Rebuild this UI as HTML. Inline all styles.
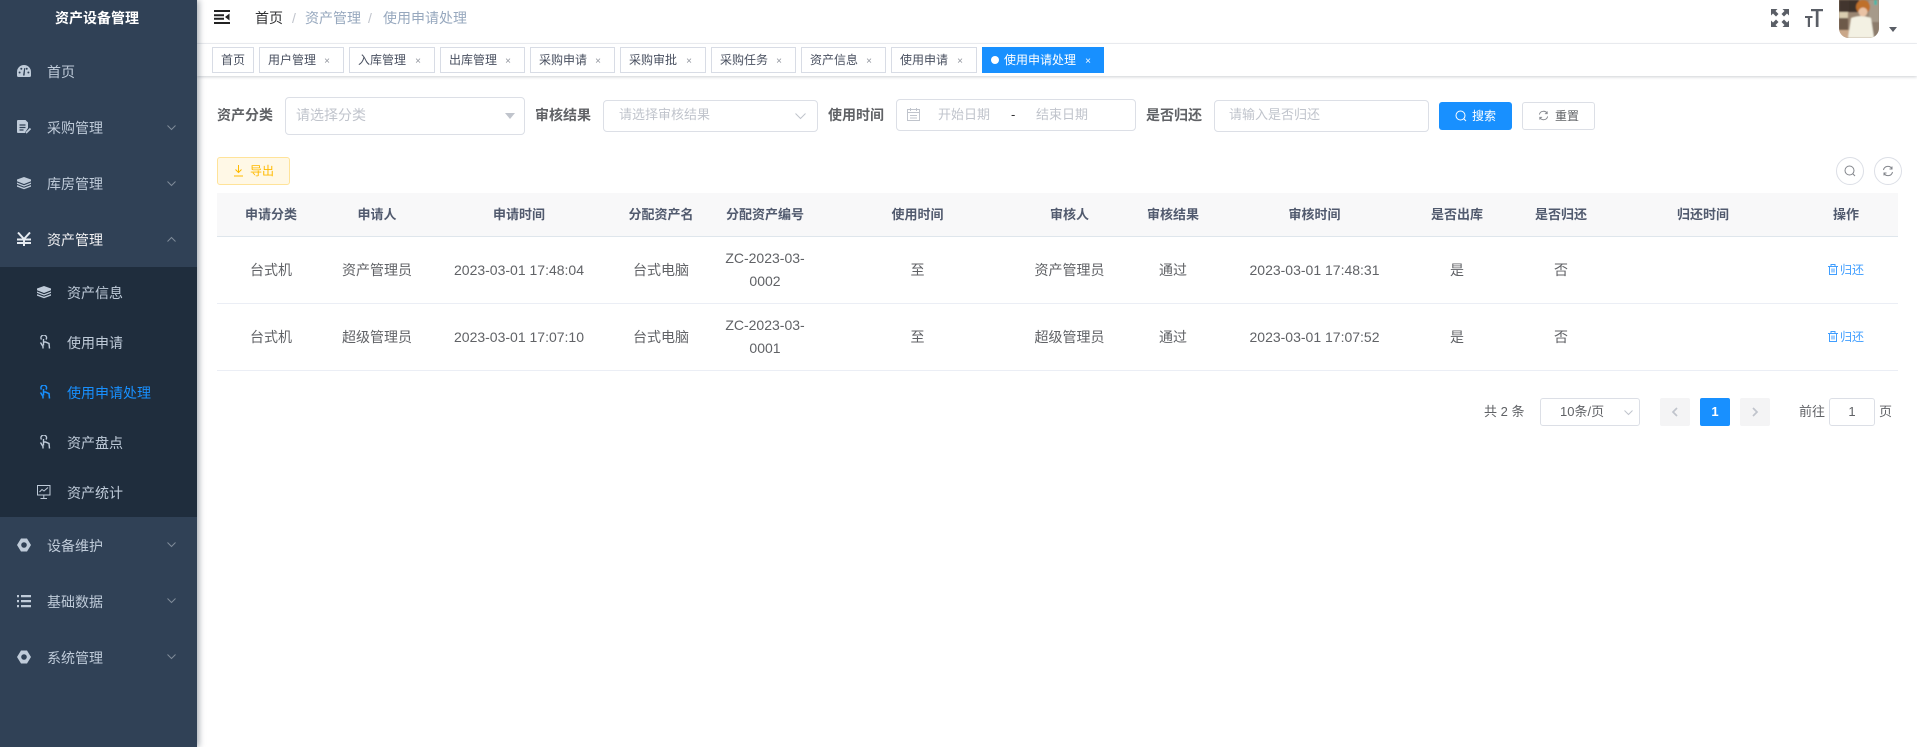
<!DOCTYPE html>
<html lang="zh-CN"><head><meta charset="utf-8"><title>使用申请处理</title>
<style>
*{box-sizing:border-box}
html,body{margin:0;padding:0;width:1917px;height:747px;overflow:hidden;background:#fff;font-family:"Liberation Sans","Noto Sans CJK SC",sans-serif;color:#606266}
.a{position:absolute;white-space:nowrap}
#side{position:absolute;left:0;top:0;width:197px;height:747px;background:#304156;box-shadow:2px 0 6px rgba(0,21,41,.35);z-index:3}
.mi{position:absolute;left:47px;font-size:14px;line-height:20px;color:#bfcbd9;white-space:nowrap}
.ic{position:absolute;left:17px;width:14px;height:14px}
.chev{position:absolute;left:167px;width:9px;height:6px}
#sub{position:absolute;left:0;top:267px;width:197px;height:250px;background:#1f2d3d}
.tag{position:absolute;top:47px;height:26px;border:1px solid #d8dce5;background:#fff;font-size:12px;line-height:24px;color:#495060;padding-left:8px;white-space:nowrap}
.tag i{position:absolute;font-style:normal;font-size:10px;color:#8f939c;right:13px;top:2px}
.lb{position:absolute;font-size:14px;font-weight:700;color:#606266;line-height:20px;top:105px;white-space:nowrap}
.inp{position:absolute;border:1px solid #dcdfe6;border-radius:4px;background:#fff}
.ph{position:absolute;font-size:13px;color:#c0c4cc;line-height:20px;top:105px;white-space:nowrap}
table{position:absolute;left:217px;top:193px;width:1681px;border-collapse:collapse;table-layout:fixed}
th{height:43px;background:#f8f8f9;font-size:13px;font-weight:700;color:#515a6e;border-bottom:1px solid #dfe6ec;padding:0 0 1px;text-align:center}
td{height:67px;font-size:14px;line-height:23px;color:#606266;border-bottom:1px solid #ebeef5;padding:1px 12px 0;text-align:center}
td.n{padding:1px 4px 0}
td.z{padding:0 4px}
.act{font-size:12px;color:#409eff;white-space:nowrap}
.pg{position:absolute;top:398px;height:28px;width:30px;border-radius:2px;background:#f4f4f5}
</style></head><body>

<div id="side">
<div class="a" style="left:55px;top:8px;font-size:14px;font-weight:700;color:#fff;line-height:20px">资产设备管理</div>

<svg class="ic" style="top:65px" viewBox="0 0 14 14"><path fill="#bfcbd9" d="M7 0A7 7 0 0 0 0 7v3.500A1.500 1.500 0 0 0 1.500 12h11a1.500 1.500 0 0 0 1.500-1.500V7a7 7 0 0 0-7-7z"/><g fill="#304156"><circle cx="2.600" cy="7.500" r="1"/><circle cx="4.300" cy="3.800" r="1"/><circle cx="11.400" cy="7.500" r="1"/><circle cx="9.700" cy="3.800" r="1"/><path d="M6 10.500l1.200-7.500 1 .2-.6 7.300z"/></g></svg>
<div class="mi" style="top:62px">首页</div>

<svg class="ic" style="top:120px" viewBox="0 0 14 14"><path fill="#bfcbd9" d="M1 0h7.500L11 2.500V8l-3 4.500V13H1a1 1 0 0 1-1-1V1a1 1 0 0 1 1-1z"/><path stroke="#304156" stroke-width="1.200" d="M2.500 5h6M2.500 7.500h6M2.500 10h4"/><path stroke="#bfcbd9" stroke-width="1.800" d="M9 13l4.500-4.500"/></svg>
<div class="mi" style="top:118px">采购管理</div>
<svg class="chev" style="top:125px" viewBox="0 0 9 6"><path fill="none" stroke="#7f8b99" d="M.5.500l4 4 4-4"/></svg>

<svg class="ic" style="top:176px" viewBox="0 0 14 14"><path fill="#bfcbd9" d="M7 1l7 2.500v1.800L7 8 0 5.300V3.500zM0 6.500L7 9.200l7-2.700v1.400L7 10.600 0 7.900zM0 9.100l7 2.700 7-2.700v1.500L7 13.300 0 10.600z"/></svg>
<div class="mi" style="top:174px">库房管理</div>
<svg class="chev" style="top:181px" viewBox="0 0 9 6"><path fill="none" stroke="#7f8b99" d="M.5.500l4 4 4-4"/></svg>

<svg class="ic" style="top:232px" viewBox="0 0 14 14"><path fill="none" stroke="#e6ebf1" stroke-width="2" d="M1 .5L7 7l6-6.500M7 7v7M0 7.500h14M0 11h14"/></svg>
<div class="mi" style="top:230px;color:#f4f4f5">资产管理</div>
<svg class="chev" style="top:236px" viewBox="0 0 9 6"><path fill="none" stroke="#7f8b99" d="M.5 5.500l4-4 4 4"/></svg>

<div id="sub"></div>
<svg class="ic" style="left:37px;top:285px" viewBox="0 0 14 14"><path fill="#bfcbd9" d="M7 1l7 2.500v1.800L7 8 0 5.300V3.500zM0 6.500L7 9.200l7-2.700v1.400L7 10.600 0 7.900zM0 9.100l7 2.700 7-2.700v1.500L7 13.300 0 10.600z"/></svg>
<div class="mi" style="left:67px;top:283px">资产信息</div>

<svg class="ic" style="left:38px;top:335px" viewBox="0 0 12 14"><g fill="none" stroke="#bfcbd9" stroke-width="1.400"><path d="M2.500 4.500a2.800 2.800 0 1 1 4.500 0"/><path d="M4.500 4v6.500M1.500 7.500l2.500 4v2M4.500 7h2l3.500 1.500.5 5"/></g></svg>
<div class="mi" style="left:67px;top:333px">使用申请</div>

<svg class="ic" style="left:38px;top:385px" viewBox="0 0 12 14"><g fill="none" stroke="#1890ff" stroke-width="1.500"><path d="M2.500 4.500a2.800 2.800 0 1 1 4.500 0"/><path d="M4.500 4v6.500M1.500 7.500l2.500 4v2M4.500 7h2l3.500 1.500.5 5"/></g></svg>
<div class="mi" style="left:67px;top:383px;color:#1890ff">使用申请处理</div>

<svg class="ic" style="left:38px;top:435px" viewBox="0 0 12 14"><g fill="none" stroke="#bfcbd9" stroke-width="1.400"><path d="M2.500 4.500a2.800 2.800 0 1 1 4.500 0"/><path d="M4.500 4v6.500M1.500 7.500l2.500 4v2M4.500 7h2l3.500 1.500.5 5"/></g></svg>
<div class="mi" style="left:67px;top:433px">资产盘点</div>

<svg class="ic" style="left:37px;top:485px" viewBox="0 0 14 14"><g fill="none" stroke="#bfcbd9"><rect x=".5" y=".5" width="12.500" height="9.500"/><path d="M2.500 7l2.500-2.500 2 1.500 4-3.500M6.800 10v3M3.500 13.500h6.500"/></g></svg>
<div class="mi" style="left:67px;top:483px">资产统计</div>

<svg class="ic" style="top:538px" viewBox="0 0 14 14"><path fill="#bfcbd9" fill-rule="evenodd" d="M4 .5h6L14 7l-4 6.500H4L0 7zM7 4.200a2.800 2.800 0 1 0 0 5.600 2.800 2.800 0 0 0 0-5.600z"/></svg>
<div class="mi" style="top:536px">设备维护</div>
<svg class="chev" style="top:542px" viewBox="0 0 9 6"><path fill="none" stroke="#7f8b99" d="M.5.500l4 4 4-4"/></svg>

<svg class="ic" style="top:594px" viewBox="0 0 14 14"><path fill="#bfcbd9" d="M0 1h2v2.200H0zM4 1h10v2.200H4zM0 6h2v2.200H0zM4 6h10v2.200H4zM0 11h2v2.200H0zM4 11h10v2.200H4z"/></svg>
<div class="mi" style="top:592px">基础数据</div>
<svg class="chev" style="top:598px" viewBox="0 0 9 6"><path fill="none" stroke="#7f8b99" d="M.5.500l4 4 4-4"/></svg>

<svg class="ic" style="top:650px" viewBox="0 0 14 14"><path fill="#bfcbd9" fill-rule="evenodd" d="M4 .5h6L14 7l-4 6.500H4L0 7zM7 4.200a2.800 2.800 0 1 0 0 5.600 2.800 2.800 0 0 0 0-5.600z"/></svg>
<div class="mi" style="top:648px">系统管理</div>
<svg class="chev" style="top:654px" viewBox="0 0 9 6"><path fill="none" stroke="#7f8b99" d="M.5.500l4 4 4-4"/></svg>
</div>

<!-- header -->
<div class="a" style="left:197px;top:0;width:1720px;height:44px;background:#fff;border-bottom:1px solid #f0f2f5"></div>
<svg class="a" style="left:214px;top:10px" width="16" height="14" viewBox="0 0 16 14"><path fill="#222" d="M0 0h16v2H0zM0 12h16v2H0zM0 4.200h10v2H0zM0 7.800h10v2H0zM15.500 3.500v7L11 7z"/></svg>
<div class="a" style="left:255px;top:8px;font-size:14px;line-height:20px;color:#303133">首页</div>
<div class="a" style="left:292px;top:8px;font-size:14px;line-height:20px;color:#c0c4cc">/</div>
<div class="a" style="left:305px;top:8px;font-size:14px;line-height:20px;color:#97a8be">资产管理</div>
<div class="a" style="left:368px;top:8px;font-size:14px;line-height:20px;color:#c0c4cc">/</div>
<div class="a" style="left:383px;top:8px;font-size:14px;line-height:20px;color:#97a8be">使用申请处理</div>

<svg class="a" style="left:1771px;top:9px" width="18" height="18" viewBox="0 0 18 18"><path fill="#5a5e66" d="M0 0h6.500L4.500 2l3 3L5 7.500l-3-3-2 2zM18 0v6.500l-2-2-3 3L10.500 5l3-3-2-2zM0 18v-6.500l2 2 3-3L7.500 13l-3 3 2 2zM18 18h-6.500l2-2-3-3 2.500-2.500 3 3 2-2z"/></svg>
<svg class="a" style="left:1805px;top:9px" width="18" height="18" viewBox="0 0 18 18"><path fill="#5a5e66" d="M6 0h12v2.200h-4.500V18H10.800V2.200H6zM0 7h7.500v2H5v9H2.800V9H0z"/></svg>

<svg class="a" style="left:1839px;top:0" width="40" height="38" viewBox="0 0 40 38"><defs><clipPath id="av"><path d="M0 0h40v28a10 10 0 0 1-10 10H10A10 10 0 0 1 0 28z"/></clipPath><filter id="bl" x="-10%" y="-10%" width="120%" height="120%"><feGaussianBlur stdDeviation=".9"/></filter></defs><g clip-path="url(#av)"><rect width="40" height="38" fill="#9a8672"/><g filter="url(#bl)"><rect x="0" y="0" width="10" height="12" fill="#43362d"/><rect x="0" y="12" width="9" height="6" fill="#d9cdb0"/><rect x="0" y="18" width="9" height="20" fill="#6d5a4a"/><rect x="0" y="30" width="14" height="8" fill="#c9a789"/><rect x="10" y="0" width="10" height="12" fill="#3d3029"/><rect x="30" y="0" width="10" height="24" fill="#a69a8a"/><rect x="26" y="22" width="14" height="16" fill="#8c7c6c"/><path d="M12 18q10-4 20 0l3 20H9z" fill="#f3f1e3"/><ellipse cx="24" cy="7" rx="7" ry="7" fill="#bf6f2c"/><ellipse cx="24" cy="12" rx="4.500" ry="4.500" fill="#e9c3a5"/><rect x="35" y="0" width="3" height="5" fill="#4fb5a5"/></g></g></svg>
<svg class="a" style="left:1889px;top:27px" width="8" height="5" viewBox="0 0 8 5"><path fill="#5a5e66" d="M0 0h8L4 5z"/></svg>

<!-- tags -->
<div class="a" style="left:197px;top:44px;width:1720px;height:32px;background:#fff;box-shadow:0 1px 3px rgba(0,21,41,.2)"></div>
<div class="tag" style="left:212px;width:42px">首页</div>
<div class="tag" style="left:259px;width:85px">用户管理<i>×</i></div>
<div class="tag" style="left:349px;width:86px">入库管理<i>×</i></div>
<div class="tag" style="left:440px;width:85px">出库管理<i>×</i></div>
<div class="tag" style="left:530px;width:85px">采购申请<i>×</i></div>
<div class="tag" style="left:620px;width:86px">采购审批<i>×</i></div>
<div class="tag" style="left:711px;width:85px">采购任务<i>×</i></div>
<div class="tag" style="left:801px;width:85px">资产信息<i>×</i></div>
<div class="tag" style="left:891px;width:86px">使用申请<i>×</i></div>
<div class="tag" style="left:982px;width:122px;background:#1890ff;border-color:#1890ff;color:#fff;padding-left:21px">使用申请处理<i style="color:#fff;right:12px">×</i></div>
<div class="a" style="left:991px;top:56px;width:8px;height:8px;border-radius:50%;background:#fff"></div>

<!-- search form -->
<div class="lb" style="left:217px">资产分类</div>
<div class="inp" style="left:285px;top:97px;width:240px;height:38px"></div>
<div class="ph" style="left:296px;font-size:14px">请选择分类</div>
<svg class="a" style="left:505px;top:113px" width="10" height="6" viewBox="0 0 10 6"><path fill="#c0c4cc" d="M0 0h10L5 6z"/></svg>

<div class="lb" style="left:535px">审核结果</div>
<div class="inp" style="left:603px;top:100px;width:215px;height:32px"></div>
<div class="ph" style="left:619px">请选择审核结果</div>
<svg class="a" style="left:795px;top:113px" width="11" height="7" viewBox="0 0 11 7"><path fill="none" stroke="#c0c4cc" d="M.5.500l5 5 5-5"/></svg>

<div class="lb" style="left:828px">使用时间</div>
<div class="inp" style="left:896px;top:99px;width:240px;height:32px"></div>
<svg class="a" style="left:907px;top:108px" width="13" height="13" viewBox="0 0 13 13"><g fill="none" stroke="#c0c4cc"><rect x=".5" y="1.500" width="12" height="11"/><path d="M.5 4.500h12M3.500 0v3M9.500 0v3M3 7.500h7M3 10h7"/></g></svg>
<div class="ph" style="left:938px;top:105px">开始日期</div>
<div class="a" style="left:1011px;top:105px;font-size:13px;line-height:20px;color:#303133">-</div>
<div class="ph" style="left:1036px;top:105px">结束日期</div>

<div class="lb" style="left:1146px">是否归还</div>
<div class="inp" style="left:1214px;top:100px;width:215px;height:32px"></div>
<div class="ph" style="left:1229px">请输入是否归还</div>

<div class="a" style="left:1439px;top:102px;width:73px;height:28px;background:#1890ff;border-radius:3px;color:#fff;font-size:12px;line-height:28px;padding-left:33px">搜索</div>
<svg class="a" style="left:1455px;top:110px" width="12" height="12" viewBox="0 0 12 12"><circle cx="5.500" cy="5.500" r="4.500" fill="none" stroke="#fff"/><path stroke="#fff" d="M8.500 8.500l2.500 2.500"/></svg>
<div class="a" style="left:1522px;top:102px;width:73px;height:28px;background:#fff;border:1px solid #dcdfe6;border-radius:3px;color:#606266;font-size:12px;line-height:26px;padding-left:32px">重置</div>
<svg class="a" style="left:1538px;top:110px" width="11" height="11" viewBox="0 0 12 12"><g fill="none" stroke="#82858b"><path d="M1.500 5A4.500 4.500 0 0 1 10 4M10.500 7A4.500 4.500 0 0 1 2 8"/><path d="M10 1.500V4H7.500M2 10.500V8h2.500"/></g></svg>

<!-- export + circles -->
<div class="a" style="left:217px;top:157px;width:73px;height:28px;background:#fff8e6;border:1px solid #ffe399;border-radius:3px;color:#ffba00;font-size:12px;line-height:26px;padding-left:32px">导出</div>
<svg class="a" style="left:233px;top:165px" width="11" height="12" viewBox="0 0 11 12"><path fill="none" stroke="#ffba00" d="M5.500 0v7.500M2.500 4.500l3 3 3-3M1 11h9"/></svg>
<div class="a" style="left:1836px;top:157px;width:28px;height:28px;border:1px solid #dcdfe6;border-radius:50%"></div>
<svg class="a" style="left:1844px;top:165px" width="12" height="12" viewBox="0 0 12 12"><circle cx="5.500" cy="5.500" r="4.500" fill="none" stroke="#82858b"/><path stroke="#82858b" d="M8.500 8.500l2.500 2.500"/></svg>
<div class="a" style="left:1874px;top:157px;width:28px;height:28px;border:1px solid #dcdfe6;border-radius:50%"></div>
<svg class="a" style="left:1882px;top:165px" width="12" height="12" viewBox="0 0 12 12"><g fill="none" stroke="#82858b"><path d="M1.500 5A4.500 4.500 0 0 1 10 4M10.500 7A4.500 4.500 0 0 1 2 8"/><path d="M10 1.500V4H7.500M2 10.500V8h2.500"/></g></svg>

<!-- table -->
<table>
<colgroup><col style="width:108px"><col style="width:104px"><col style="width:180px"><col style="width:104px"><col style="width:104px"><col style="width:201px"><col style="width:103px"><col style="width:104px"><col style="width:179px"><col style="width:106px"><col style="width:102px"><col style="width:182px"><col style="width:104px"></colgroup>
<tr><th>申请分类</th><th>申请人</th><th>申请时间</th><th>分配资产名</th><th>分配资产编号</th><th>使用时间</th><th>审核人</th><th>审核结果</th><th>审核时间</th><th>是否出库</th><th>是否归还</th><th>归还时间</th><th>操作</th></tr>
<tr><td>台式机</td><td class="n">资产管理员</td><td class="n">2023-03-01 17:48:04</td><td>台式电脑</td><td class="z">ZC-2023-03-<br>0002</td><td>至</td><td class="n">资产管理员</td><td>通过</td><td class="n">2023-03-01 17:48:31</td><td>是</td><td>否</td><td></td><td class="n"><span class="act"><svg width="10" height="11" viewBox="0 0 10 11" style="vertical-align:-1px;margin-right:2px"><path fill="none" stroke="#409eff" d="M0 2.500h10M3 2.500V.5h4v2M1.500 2.500v8h7v-8M4 4.500v4M6 4.500v4"/></svg>归还</span></td></tr>
<tr><td>台式机</td><td class="n">超级管理员</td><td class="n">2023-03-01 17:07:10</td><td>台式电脑</td><td class="z">ZC-2023-03-<br>0001</td><td>至</td><td class="n">超级管理员</td><td>通过</td><td class="n">2023-03-01 17:07:52</td><td>是</td><td>否</td><td></td><td class="n"><span class="act"><svg width="10" height="11" viewBox="0 0 10 11" style="vertical-align:-1px;margin-right:2px"><path fill="none" stroke="#409eff" d="M0 2.500h10M3 2.500V.5h4v2M1.500 2.500v8h7v-8M4 4.500v4M6 4.500v4"/></svg>归还</span></td></tr>
</table>

<!-- pagination -->
<div class="a" style="left:1484px;top:402px;font-size:13px;line-height:20px;color:#606266">共 2 条</div>
<div class="inp" style="left:1540px;top:398px;width:100px;height:28px;border-radius:3px"></div>
<div class="a" style="left:1560px;top:402px;font-size:13px;line-height:20px;color:#606266">10条/页</div>
<svg class="a" style="left:1624px;top:410px" width="9" height="6" viewBox="0 0 9 6"><path fill="none" stroke="#c0c4cc" d="M.5.500l4 4 4-4"/></svg>
<div class="pg" style="left:1660px"></div>
<svg class="a" style="left:1671px;top:407px" width="7" height="10" viewBox="0 0 7 10"><path fill="none" stroke="#c0c4cc" stroke-width="1.700" d="M6 1L2 5l4 4"/></svg>
<div class="pg" style="left:1700px;background:#1890ff;color:#fff;font-size:13px;font-weight:700;line-height:28px;text-align:center">1</div>
<div class="pg" style="left:1740px"></div>
<svg class="a" style="left:1752px;top:407px" width="7" height="10" viewBox="0 0 7 10"><path fill="none" stroke="#c0c4cc" stroke-width="1.700" d="M1 1l4 4-4 4"/></svg>
<div class="a" style="left:1799px;top:402px;font-size:13px;line-height:20px;color:#606266">前往</div>
<div class="inp" style="left:1829px;top:398px;width:46px;height:28px;border-radius:3px;font-size:13px;line-height:26px;text-align:center;color:#606266">1</div>
<div class="a" style="left:1879px;top:402px;font-size:13px;line-height:20px;color:#606266">页</div>
</body></html>
